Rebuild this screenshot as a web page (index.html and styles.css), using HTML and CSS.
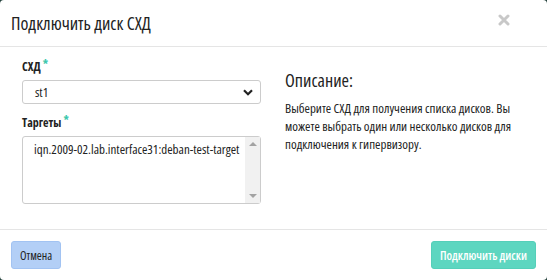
FILE: index.html
```html
<!DOCTYPE html>
<html lang="ru">
<head>
<meta charset="utf-8">
<link rel="stylesheet" href="styles.css">
</head>
<body>
<div class="modal">
  <div class="modal-header">
    <h4 class="modal-title">Подключить диск СХД</h4>
    <svg class="close" width="12" height="12" viewBox="0 0 12 12"><path d="M2 2 L10 10 M10 2 L2 10" stroke="#c8c8c8" stroke-width="3" stroke-linecap="round"/></svg>
  </div>
  <div class="modal-body">
    <div class="col-left">
      <div class="group">
        <label class="label">СХД <span class="req">*</span></label>
        <div class="select">
          <span class="select-value">st1</span>
          <svg class="chevron" width="10" height="7" viewBox="0 0 10 7"><path d="M1 1.2 L5 5.2 L9 1.2" fill="none" stroke="#222" stroke-width="2.2"/></svg>
        </div>
      </div>
      <div class="group">
        <label class="label">Таргеты <span class="req">*</span></label>
        <div class="textarea">
          <div class="ta-content">iqn.2009-02.lab.interface31:deban-test-target</div>
          <div class="ta-scroll">
            <span class="arrow up"></span>
            <span class="arrow down"></span>
          </div>
        </div>
      </div>
    </div>
    <div class="col-right">
      <h3 class="desc-title">Описание:</h3>
      <p class="desc-text">Выберите СХД для получения списка дисков. Вы можете выбрать один или несколько дисков для подключения к гипервизору.</p>
    </div>
  </div>
  <div class="modal-footer">
    <button class="btn btn-cancel">Отмена</button>
    <button class="btn btn-primary">Подключить диски</button>
  </div>
</div>
</body>
</html>
```
FILE: styles.css
```css
html, body {
  margin: 0;
  padding: 0;
}
body {
  width: 547px;
  height: 280px;
  background: #23403b;
  font-family: "Open Sans", "DejaVu Sans Condensed", sans-serif;
  font-stretch: 75%;
  color: #333;
  overflow: hidden;
}
.modal {
  width: 547px;
  height: 280px;
  background: #fff;
  border-radius: 4px;
  display: flex;
  flex-direction: column;
}
.modal-header {
  height: 46px;
  border-bottom: 1px solid #e5e5e5;
  display: flex;
  align-items: center;
  justify-content: space-between;
  padding: 0 11px;
}
.modal-title {
  margin: 0;
  font-size: 18px;
  font-weight: normal;
  color: #222;
}
.close {
  margin-right: 26px;
  margin-top: -6px;
}
.modal-body {
  height: 182px;
  box-sizing: border-box;
  padding: 9px 11px 0 22px;
  display: flex;
}
.col-left {
  width: 239px;
}
.col-right {
  margin-left: 24px;
  flex: 1;
}
.group {
  margin-bottom: 8px;
}
.label {
  display: block;
  font-size: 12px;
  font-weight: bold;
  color: #222;
  line-height: 18px;
  margin-bottom: 4px;
}
.req {
  color: #3cc7ac;
  vertical-align: 2px;
}
.select {
  height: 24px;
  box-sizing: border-box;
  border: 1px solid #ccc;
  border-radius: 3px;
  display: flex;
  align-items: center;
  justify-content: space-between;
  padding: 0 7px 0 12px;
  font-size: 13px;
  color: #222;
}
.textarea {
  height: 68px;
  box-sizing: border-box;
  border: 1px solid #ccc;
  border-radius: 3px;
  display: flex;
  margin-top: 4px;
}
.ta-content {
  flex: 1;
  padding: 3px 0 0 11px;
  font-size: 13px;
  color: #222;
  line-height: 18px;
  white-space: nowrap;
}
.ta-scroll {
  width: 15px;
  background: #f1f1f1;
  display: flex;
  flex-direction: column;
  justify-content: space-between;
  align-items: center;
  padding: 5px 0;
}
.arrow {
  width: 0;
  height: 0;
  border-left: 4px solid transparent;
  border-right: 4px solid transparent;
}
.arrow.up {
  border-bottom: 4px solid #a3a3a3;
}
.arrow.down {
  border-top: 4px solid #a3a3a3;
}
.desc-title {
  margin: 12px 0 0;
  font-size: 18px;
  line-height: 24px;
  font-weight: normal;
  color: #222;
}
.desc-text {
  margin: 7px 0 0;
  font-size: 13px;
  line-height: 18px;
  color: #222;
}
.modal-footer {
  border-top: 1px solid #e5e5e5;
  flex: 1;
  display: flex;
  justify-content: space-between;
  align-items: flex-start;
  padding: 11px 11px 0 11px;
}
.btn {
  height: 28px;
  border-radius: 3px;
  font-family: inherit;
  font-stretch: 75%;
  font-size: 12px;
  padding: 0 8px;
}
.btn-cancel {
  background: #b3cff6;
  border: 1px solid #a2c3f2;
  color: #222;
}
.btn-primary {
  background: #5dd6c0;
  border: 1px solid #55cfb9;
  color: #fff;
  font-weight: 600;
}
```
